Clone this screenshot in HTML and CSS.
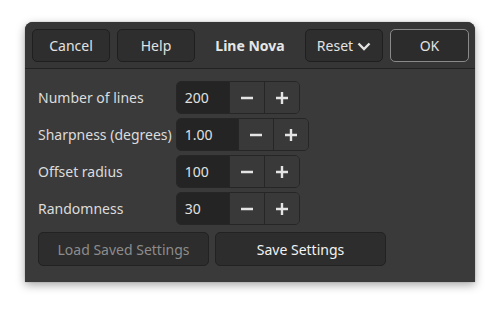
FILE: index.html
```html
<!DOCTYPE html>
<html lang="en">
<head>
    <meta charset="UTF-8">
    <title>Line Nova</title>
    <link rel="stylesheet" href="styles.css">
</head>
<body>
    <div class="dialog">
        <div class="headerbar">
            <button class="btn">Cancel</button>
            <button class="btn">Help</button>
            <div class="title">Line Nova</div>
            <button class="btn">Reset
                <svg class="chevron" width="14" height="14" viewBox="0 0 14 14"><path d="M1.5 4.5 L7 10 L12.5 4.5" fill="none" stroke="currentColor" stroke-width="2.4"/></svg>
            </button>
            <button class="btn btn-ok">OK</button>
        </div>

        <div class="content">
            <div class="grid">
                <label>Number of lines</label>
                <div class="spin">
                    <span class="spin-entry">200</span>
                    <span class="spin-btn"><svg width="14" height="14" viewBox="0 0 14 14"><path d="M1 7 H13" stroke="currentColor" stroke-width="2.4"/></svg></span>
                    <span class="spin-btn"><svg width="14" height="14" viewBox="0 0 14 14"><path d="M1 7 H13 M7 1 V13" stroke="currentColor" stroke-width="2.4"/></svg></span>
                </div>

                <label>Sharpness (degrees)</label>
                <div class="spin">
                    <span class="spin-entry wide">1.00</span>
                    <span class="spin-btn"><svg width="14" height="14" viewBox="0 0 14 14"><path d="M1 7 H13" stroke="currentColor" stroke-width="2.4"/></svg></span>
                    <span class="spin-btn"><svg width="14" height="14" viewBox="0 0 14 14"><path d="M1 7 H13 M7 1 V13" stroke="currentColor" stroke-width="2.4"/></svg></span>
                </div>

                <label>Offset radius</label>
                <div class="spin">
                    <span class="spin-entry">100</span>
                    <span class="spin-btn"><svg width="14" height="14" viewBox="0 0 14 14"><path d="M1 7 H13" stroke="currentColor" stroke-width="2.4"/></svg></span>
                    <span class="spin-btn"><svg width="14" height="14" viewBox="0 0 14 14"><path d="M1 7 H13 M7 1 V13" stroke="currentColor" stroke-width="2.4"/></svg></span>
                </div>

                <label>Randomness</label>
                <div class="spin">
                    <span class="spin-entry">30</span>
                    <span class="spin-btn"><svg width="14" height="14" viewBox="0 0 14 14"><path d="M1 7 H13" stroke="currentColor" stroke-width="2.4"/></svg></span>
                    <span class="spin-btn"><svg width="14" height="14" viewBox="0 0 14 14"><path d="M1 7 H13 M7 1 V13" stroke="currentColor" stroke-width="2.4"/></svg></span>
                </div>
            </div>

            <div class="settings-row">
                <button class="btn btn-wide" disabled>Load Saved Settings</button>
                <button class="btn btn-wide btn-strong">Save Settings</button>
            </div>
        </div>
    </div>
</body>
</html>
```

FILE: styles.css
```css
* {
    margin: 0;
    padding: 0;
    box-sizing: border-box;
}

body {
    font-family: 'Noto Sans', 'Open Sans', sans-serif;
    font-size: 14px;
    background: #ffffff;
    width: 501px;
    height: 311px;
    padding: 22px 26px 0 25px;
}

.dialog {
    width: 450px;
    height: 260px;
    background: #3a3a3a;
    border-radius: 8px 8px 0 0;
    box-shadow: 0 3px 10px rgba(0,0,0,0.35), 0 0 1px rgba(0,0,0,0.5);
    color: #dedede;
}

.headerbar {
    display: flex;
    align-items: center;
    gap: 7px;
    height: 47px;
    padding: 0 6px 0 7px;
    background: #363636;
    border-bottom: 1px solid #222222;
    border-radius: 8px 8px 0 0;
}

.btn {
    font-family: inherit;
    font-size: 14px;
    color: #e2e2e2;
    width: 78px;
    height: 33px;
    background: #2e2e2e;
    border: 1px solid #1f1f1f;
    border-radius: 5px;
    display: flex;
    align-items: center;
    justify-content: center;
    gap: 4px;
}

.btn-ok {
    border-color: #8a8a8a;
    width: 79px;
    background: #2c2c2c;
}

.chevron {
    margin-top: 1px;
}

.title {
    flex: 1;
    text-align: center;
    font-weight: bold;
    color: #e6e6e6;
}

.content {
    padding: 12px 13px 0 13px;
}

.grid {
    display: grid;
    grid-template-columns: auto auto;
    justify-content: start;
    align-items: center;
    column-gap: 4px;
    row-gap: 4px;
}

.grid label {
    color: #dcdcdc;
}

.spin {
    display: flex;
    height: 33px;
    justify-self: start;
    border: 1px solid #262626;
    border-radius: 5px;
    overflow: hidden;
}

.spin-entry {
    width: 52px;
    background: #242424;
    padding-left: 8px;
    display: flex;
    align-items: center;
    color: #e0e0e0;
}

.spin-entry.wide {
    width: 61px;
}

.spin-btn {
    width: 35px;
    background: #393939;
    border-left: 1px solid #262626;
    display: flex;
    align-items: center;
    justify-content: center;
    color: #e4e4e4;
}

.settings-row {
    display: flex;
    gap: 6px;
    margin-top: 7px;
}

.btn-wide {
    width: 171px;
    height: 34px;
    background: #2d2d2d;
    border-color: #222222;
}

.btn-wide:disabled {
    color: #8c8c8c;
}

.btn-strong {
    color: #f2f2f2;
}
```
